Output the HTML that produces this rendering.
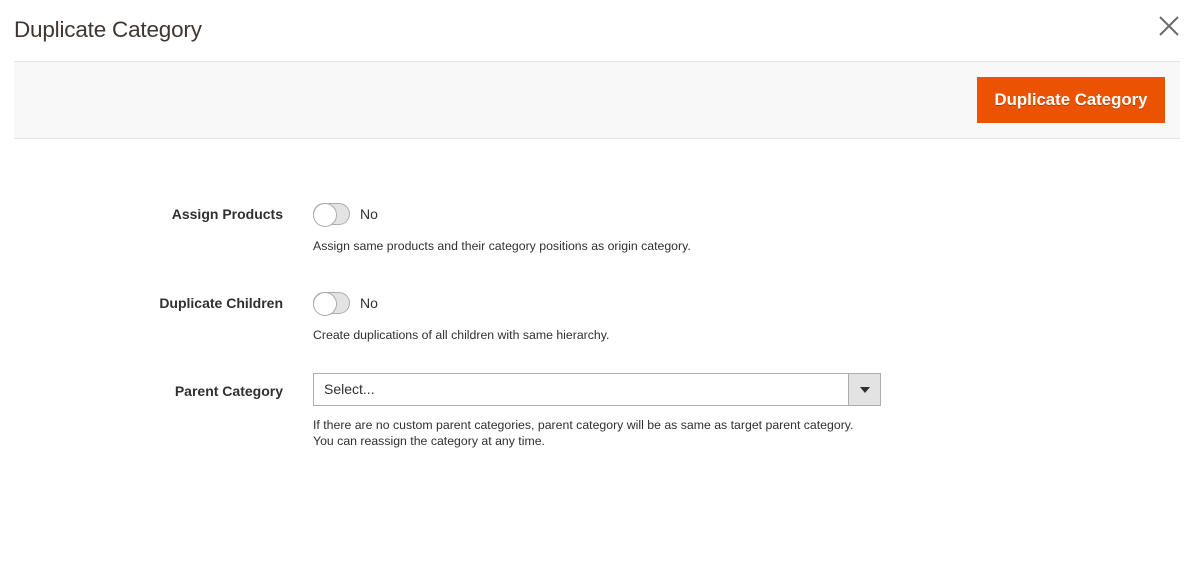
<!DOCTYPE html>
<html><head><meta charset="utf-8"><style>
*{margin:0;padding:0;box-sizing:border-box}
body{width:1192px;height:570px;background:#fff;font-family:"Liberation Sans",sans-serif;position:relative;overflow:hidden;color:#303030}
.t{position:absolute;left:14px;top:17px;font-size:22.5px;color:#41362f;letter-spacing:-0.2px}
.x{position:absolute;left:1158px;top:15px;width:22px;height:22px}
.bar{position:absolute;left:14px;top:61px;width:1166px;height:78px;background:#f8f8f8;border-top:1px solid #e3e3e3;border-bottom:1px solid #e3e3e3}
.btn{position:absolute;left:977px;top:77px;width:188px;height:46px;background:#eb5202;color:#fff;font-weight:bold;font-size:16.8px;line-height:46px;text-align:center;text-shadow:0 1px 0 rgba(0,0,0,.25)}
.lbl{position:absolute;right:909px;font-weight:bold;font-size:14px;color:#303030;white-space:nowrap}
.tg{position:absolute;left:313px;width:37px;height:22px;border:1px solid #adadad;border-radius:12px;background:#e3e3e3}
.tg:before{content:"";position:absolute;left:-1px;top:-1px;width:22px;height:22px;border:1px solid #adadad;border-radius:50%;background:#fff}
.no{position:absolute;left:360px;font-size:14px;color:#303030}
.n{position:absolute;left:313px;font-size:12.3px;color:#303030;line-height:16px;white-space:nowrap}
.sel{position:absolute;left:313px;top:373px;width:568px;height:33px;border:1px solid #adadad;background:#fff;font-size:14px;line-height:31px;padding-left:10px;color:#303030}
.sel .a{position:absolute;right:0;top:0;width:32px;height:31px;background:#e3e3e3;border-left:1px solid #adadad}
.sel .a:after{content:"";position:absolute;left:11px;top:13px;border-left:5px solid transparent;border-right:5px solid transparent;border-top:6px solid #303030}
</style></head><body>
<div class="t">Duplicate Category</div>
<svg class="x" viewBox="0 0 22 22"><path d="M2 2L20 20M20 2L2 20" stroke="#6b6b6b" stroke-width="2"/></svg>
<div class="bar"></div>
<div class="btn">Duplicate Category</div>

<div class="lbl" style="top:206px">Assign Products</div>
<div class="tg" style="top:203px"></div>
<div class="no" style="top:206px">No</div>
<div class="n" style="top:238px">Assign same products and their category positions as origin category.</div>

<div class="lbl" style="top:295px">Duplicate Children</div>
<div class="tg" style="top:292px"></div>
<div class="no" style="top:295px">No</div>
<div class="n" style="top:327px">Create duplications of all children with same hierarchy.</div>

<div class="lbl" style="top:383px">Parent Category</div>
<div class="sel">Select...<div class="a"></div></div>
<div class="n" style="top:417px">If there are no custom parent categories, parent category will be as same as target parent category.<br>You can reassign the category at any time.</div>
</body></html>
